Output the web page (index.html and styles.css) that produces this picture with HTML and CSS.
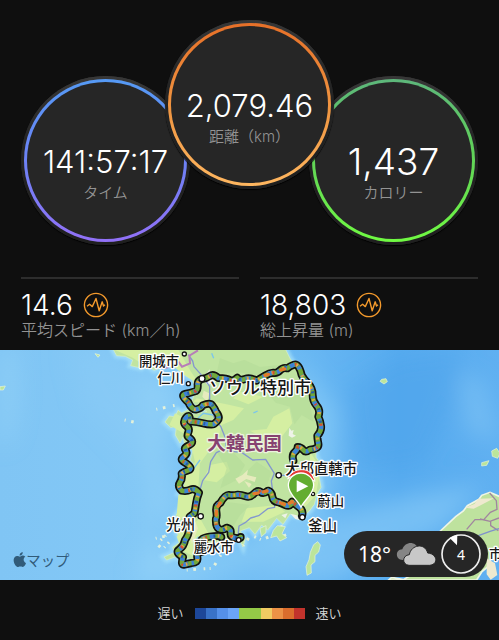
FILE: index.html
```html
<!DOCTYPE html>
<html lang="ja">
<head>
<meta charset="utf-8">
<meta name="viewport" content="width=device-width, initial-scale=1">
<title>アクティビティ</title>
<link rel="stylesheet" href="styles.css">
</head>
<body>
<main>
  <section class="dials">
    <div class="dial dial-time"><div class="ring"><div class="face">
      <span class="value">141:57:17</span><span class="label">タイム</span>
    </div></div></div>
    <div class="dial dial-distance"><div class="ring"><div class="face">
      <span class="value">2,079.46</span><span class="label">距離（km）</span>
    </div></div></div>
    <div class="dial dial-calories"><div class="ring"><div class="face">
      <span class="value large">1,437</span><span class="label">カロリー</span>
    </div></div></div>
  </section>

  <section class="stats">
    <div class="stat">
      <div class="stat-line"><span class="stat-value">14.6</span>
        <svg class="pulse" viewBox="0 0 26 26"><circle cx="13" cy="13" r="11.6"/><path d="M4 14.2 6.6 12.3 9.3 14.6 13 6.5 16.2 18.8 19.2 9.8 20.5 14 22 12.8"/></svg>
      </div>
      <span class="label">平均スピード (km／h)</span>
    </div>
    <div class="stat">
      <div class="stat-line"><span class="stat-value">18,803</span>
        <svg class="pulse" viewBox="0 0 26 26"><circle cx="13" cy="13" r="11.6"/><path d="M4 14.2 6.6 12.3 9.3 14.6 13 6.5 16.2 18.8 19.2 9.8 20.5 14 22 12.8"/></svg>
      </div>
      <span class="label">総上昇量 (m)</span>
    </div>
  </section>

  <section class="map">
    <svg class="map-art" viewBox="0 15 1497 690">
      <defs>
        <linearGradient id="sea" x1="0" x2="1" y1="0" y2="0">
          <stop offset="0" stop-color="#80c5f4"/><stop offset=".3" stop-color="#83c8f6"/>
          <stop offset=".65" stop-color="#65b5f2"/><stop offset=".8" stop-color="#56abef"/><stop offset="1" stop-color="#60b0f1"/>
        </linearGradient>
        <filter id="soft" x="-50%" y="-50%" width="200%" height="200%"><feGaussianBlur stdDeviation="34"/></filter>
        <filter id="edge"><feGaussianBlur stdDeviation="5"/></filter>
        <path id="coast" d="M338 10 350 32 376 34 398 45 392 62 423 69 440 58 462 76 500 60 538 64 552 88 578 104 583 124 606 132 583 150 575 169 596 190 621 199 580 207 565 194 545 204 534 196 525 216 508 213 495 231 513 248 530 240 526 270 540 294 549 276 556 305 579 315 571 345 588 363 557 392 552 420 536 447 559 456 544 488 528 511 544 532 530 562 545 588 518 607 524 622 492 636 500 645 530 634 542 649 565 640 585 653 596 627 616 616 627 600 650 607 675 590 693 600 704 574 719 586 729 606 736 580 720 558 748 548 765 568 785 540 803 555 830 520 849 538 870 507 905 517 928 498 943 478 950 449 963 427 957 394 964 360 948 337 947 294 956 240 947 183 925 120 895 69 871 42 855 10Z"/>
        <path id="north" d="M880 347Q875 330 884 322T893 306Q903 306 910 315T930 314Q958 312 955 296T952 272Q965 258 963 243T955 215Q962 195 950 182T938 150Q938 130 924 115T905 90Q896 54 882 59T862 70Q850 66 840 76T820 83Q808 84 795 92T770 107Q750 96 735 102T712 98Q700 110 690 105T655 99Q640 86 630 93T605 102Q592 107 593 120T588 138Q570 144 555 147T565 172Q576 196 590 193T608 181Q630 172 637 181T648 200Q662 218 652 228T640 238Q625 239 610 235T570 229Q570 204 558 218T558 242Q570 250 565 262T566 277Q586 291 568 300T556 314Q564 326 551 335T554 352Q582 370 565 376T545 386Q548 400 540 412T545 437Q560 440 572 434T597 443Q590 460 588 476T583 505L569 515Q563 535 566 550T555 585Q552 603 538 613T549 636Q541 662 553 659T575 654Q595 654 592 638T608 620Q620 600 608 590T630 575T664 577"/>
        <path id="south" d="M906 513Q911 497 898 487T876 470Q872 487 856 480T836 472Q819 470 817 455T804 437Q791 448 782 441T762 446Q750 459 737 454T714 449Q698 452 687 450T661 474Q646 481 649 500T648 520Q646 546 657 552T680 548Q694 552 692 564T706 579T722 576"/>
      </defs>
      <rect y="15" width="1497" height="690" fill="url(#sea)"/>
      <g filter="url(#soft)">
        <path fill="#9ad7fa" opacity=".5" d="M0 15H45L55 160 35 270 0 310ZM410 90 540 130 480 330 520 470 400 700 560 705 940 600 1000 370 1010 200 890 30 920 260 780 580 620 650 480 620Z"/>
        <path fill="#8bcdf7" opacity=".45" d="M210 15H330L450 80 510 200 470 430 380 310 250 180ZM1380 80 1450 110 1497 290 1400 260Z"/>
        <path fill="#489fe9" opacity=".4" d="M1040 130 1190 40 1390 15 1350 190 1280 350 1070 380Z"/>
        <path fill="#83c8f6" opacity=".7" d="M1000 520 1230 450 1450 420 1320 560 1000 705 740 705Z"/>
      </g>
      <use href="#coast" fill="none" stroke="#a9e3fa" stroke-width="18" opacity=".7" filter="url(#edge)"/>
      <use href="#coast" fill="#c0e4a1" stroke="#d9f0c2" stroke-width="2"/>
      <g fill="#d5efa2">
        <path d="M345 15H535L573 80 600 120 560 95 515 60 440 65 398 38ZM590 160 690 180 732 190 700 225 665 240 655 280 600 355 595 425 550 440 558 385 585 350 562 250 650 240 640 180 580 170ZM820 215 868 190 877 235 845 275 790 280 750 257 800 252ZM720 140 790 155 745 178 700 160ZM535 450 583 445 565 548 600 520 625 565 590 640 545 615 530 575 560 530 530 510ZM930 320 962 370 948 450 915 485 870 460 930 430ZM525 205 554 220 550 265 508 240ZM740 490 830 480 855 500 790 530 725 530ZM630 360 680 350 690 378 650 412 610 405Z"/>
      </g>
      <g fill="#b2da98" opacity=".5">
        <path d="M660 40 700 55 733 45 780 66 840 60 825 80 770 90 710 80 650 86ZM790 130 850 135 925 155 940 230 905 210 883 238 870 185 827 173ZM650 320 702 325 735 360 710 405 661 430 680 370ZM675 470 750 480 720 510 690 560 660 530ZM770 350 814 380 800 425 755 420 735 385Z"/>
      </g>
      <g fill="#e6ebbd">
        <path d="M706 401 727 390 744 374 741 390 769 397 764 411 739 402 717 416ZM733 408 755 417 747 428ZM566 560 586 530 594 550 576 598ZM611 137 628 145 622 170 607 155Z"/>
      </g>
      <g fill="#eef3e8">
        <path d="m868 248 6 9 7-2-3 12 10 5-12 6-10-6ZM604 96 620 85 629 73 630 101 649 110 622 119ZM872 507 890 511 901 526 886 522ZM844 510 863 505 856 520Z"/>
      </g>
      <g fill="none" stroke="#edf5d7" stroke-width="9" stroke-dasharray="3 17 8 23 5 13" opacity=".9">
        <path d="M467 580 494 574 508 591 488 613 470 596 507 563M560 675 600 672 638 670 665 626M730 602 752 570 785 585 830 565 857 578 840 535M469 193 530 180M374 225 401 231"/>
      </g>
      <path fill="#bce59b" stroke="#e8f4da" stroke-width="2" d="M941 599 953 590 961 600 956 621 945 631 945 650 933 660 934 684 921 691 918 665 927 644 931 622ZM1145 103 1158 101 1162 110 1152 117 1140 109ZM1475 318 1490 310 1500 325 1493 340 1477 334ZM1445 353 1467 347 1460 361 1445 363ZM832 542 856 545 846 566 860 578 840 588 830 573 812 578 820 556ZM780 550 798 542 798 563 784 575ZM0 125 16 123 10 135 0 135ZM285 26 300 30 294 37Z"/>
      <path fill="#bee29e" stroke="#eff5e5" stroke-width="5" d="M1318 561 1367 515 1390 498 1402 482 1437 463 1445 451 1470 442 1500 455V642L1475 633 1463 666 1446 680 1430 705H1166L1175 697 1210 704 1238 688 1320 680 1350 660Z"/>
      <path fill="#eee9cf" d="m1395 488 28-11 12-16 47-1-40 21-21 10ZM1460 640 1485 655 1492 690 1472 704 1460 688Z"/>
      <g fill="none" stroke="#a1869f" stroke-width="4"><path d="M1469 444 1489 467 1491 493 1471 502 1452 523 1425 524 1400 553M1440 522 1470 529 1497 519M1472 527V542L1495 557"/></g>
      <path fill="none" stroke="#7f91cb" stroke-width="4" d="M1435 572 1470 559 1497 551"/>
      <g fill="none" stroke="#8398ce" stroke-width="4" stroke-linejoin="round">
        <path d="M565 29 578 48 582 65 606 92 629 124 629 180 646 225 662 244 677 281 678 309 649 323 632 350 626 382 608 407 601 431M680 317 726 323 758 345 797 343 823 385 814 408 817 431 822 465 824 487 803 491 776 512 752 519 737 532 717 543 714 571M838 391H866"/>
      </g>
      <path fill="none" stroke="#b77eb8" stroke-width="6" d="M594 16 568 32 570 55 546 65 535 50M505 67 485 70"/>
      <g fill="none" stroke="#79c5ed" stroke-width="4"><path d="M640 210 610 205 594 219M600 345 584 367 567 379M760 204 773 198M583 590 596 575M635 25 641 40"/></g>
      <g class="route">
        <g class="casing"><use href="#north"/><use href="#south"/></g>
        <g class="base"><use href="#north"/><use href="#south"/></g>
        <g class="blue"><use href="#north"/><use href="#south"/></g>
        <g class="dark"><use href="#north"/><use href="#south"/></g>
        <g class="gold"><use href="#north"/><use href="#south"/></g>
        <g class="red"><use href="#north"/><use href="#south"/></g>
        <path class="hot" d="M795 91 805 88M842 75 865 69M661 474 649 491 649 519M762 446 782 443 804 437M842 474 858 480 876 470 890 480"/>
      </g>
      <g fill="#fff" stroke="#111" stroke-width="4">
        <circle cx="553" cy="27" r="6"/><circle cx="565" cy="116" r="6"/><circle cx="606" cy="101" r="9"/>
        <circle cx="836" cy="391" r="8"/><circle cx="602" cy="514" r="8"/><circle cx="716" cy="585" r="7"/><circle cx="907" cy="517" r="8"/><circle cx="939" cy="447" r="5"/>
      </g>
      <g class="places">
        <text x="417" y="62" font-size="40">開城市</text>
        <text x="472" y="113" font-size="40">仁川</text>
        <text x="627" y="146" font-size="51">ソウル特別市</text>
        <text class="country" x="622" y="314" font-size="56">大韓民国</text>
        <text x="856" y="387" font-size="43">大邱直轄市</text>
        <text x="952" y="484" font-size="40">蔚山</text>
        <text x="925" y="558" font-size="43">釜山</text>
        <text x="499" y="555" font-size="43">光州</text>
        <text x="581" y="621" font-size="40">麗水市</text>
        <text x="1467" y="642" font-size="40">市</text>
      </g>
      <path fill="#e53935" stroke="#fff" stroke-width="3" d="M863 402C873 380 887 374 906 374 926 374 938 385 945 409L937 404C926 391 917 386 903 386 886 386 874 393 863 402Z"/>
      <path fill="#63ad31" stroke="#fff" stroke-width="4" d="M903 487C894 464 865 449 865 421A38 37 0 0 1 941 421C941 449 912 464 903 487Z"/>
      <path fill="#fff" d="M890 406 925 424 890 442Z"/>
      <g fill="#315b79">
        <path d="M60 635C53 631 41 632 41 647 42 658 50 667 55 666 59 664 63 664 68 666 73 666 77 658 78 654 69 649 69 639 76 635 71 630 65 631 60 635ZM59 632C58 626 63 622 68 621 69 627 65 632 59 632Z"/>
        <text class="brand" x="79" y="662" font-size="43">マップ</text>
      </g>
    </svg>
    <aside class="weather">
      <span class="temp">18°</span>
      <svg class="clouds" viewBox="0 0 120 70">
        <path fill="#858585" d="M20 53C-2 53-4 22 19 21 28-3 58-5 68 21L45 50Z"/>
        <path fill="#c8c8c8" stroke="#262626" stroke-width="3" d="M39 69C17 67 18 39 40 37 45 7 87 0 95 32 126 35 127 67 101 69Z"/>
      </svg>
      <div class="wind">
        <svg viewBox="0 0 120 120"><circle cx="60" cy="60" r="57" fill="none" stroke="#eee" stroke-width="5"/><path fill="#fff" d="M26 12Q37 4 49 3L48 34Z"/></svg>
        <span>4</span>
      </div>
    </aside>
  </section>

  <footer class="legend">
    <span>遅い</span>
    <div class="scale"><i class="s1"></i><i class="s2"></i><i class="s3"></i><i class="s4"></i><i class="s5"></i><i class="s5"></i><i class="s6"></i><i class="s7"></i><i class="s8"></i><i class="s9"></i></div>
    <span>速い</span>
  </footer>
</main>
</body>
</html>
```
FILE: styles.css
```css
* { box-sizing: border-box; }
body {
  margin: 0;
  background: #0f0f0f;
  color: #fff;
  font-family: Inter, "Noto Sans CJK JP", sans-serif;
}
.dials {
  display: flex;
  justify-content: center;
  align-items: flex-end;
  padding-top: 20px;
}
.dial {
  width: 169px;
  height: 169px;
  flex: none;
  padding: 3px;
  border-radius: 50%;
  background: linear-gradient(#505050, #2d2d2d 40%, #222);
  box-shadow: inset 0 0 0 3px #1b1b1b77, 0 1px 1px #000;
}
.dial-distance {
  position: relative;
  z-index: 1;
  margin: 0 -25px 56px;
}
.ring {
  height: 100%;
  padding: 3px;
  border-radius: 50%;
}
.dial-time .ring { background: linear-gradient(#559af5, #6d82f5 50%, #9271f8); }
.dial-distance .ring { background: linear-gradient(#e77028, #f09743 55%, #ffb760); }
.dial-calories .ring { background: linear-gradient(#5db77b, #60d159 45%, #70fa42); }
.face {
  height: 100%;
  border-radius: 50%;
  background: #262626;
  display: flex;
  flex-direction: column;
  align-items: center;
  padding-top: 57px;
}
.value {
  font-size: 31px;
  font-weight: 350;
  line-height: 45px;
  white-space: nowrap;
}
.value.large { font-size: 37px; }
.label {
  font-weight: 350;
  font-size: 15px;
  line-height: 18px;
  color: #939393;
  white-space: nowrap;
}
.stats {
  display: grid;
  grid-template-columns: 1fr 1fr;
  gap: 21px;
  padding: 32px 21px 10px;
}
.stat { border-top: 2px solid #2d2d2d; padding-top: 10px; }
.stat-line {
  display: flex;
  align-items: center;
  gap: 10px;
  height: 32px;
}
.stat-value { font-size: 28px; font-weight: 350; line-height: 32px; }
.stat .label { display: block; font-size: 16px; line-height: 19px; }
.pulse {
  width: 26px;
  height: 26px;
  fill: none;
  stroke: #f49a2c;
  stroke-width: 1.4;
  stroke-linejoin: round;
}
.map { position: relative; }
.map-art { display: block; width: 100%; height: auto; }
.route { fill: none; stroke-linejoin: round; stroke-linecap: round; }
.casing { stroke: #111; stroke-width: 24; }
.base { stroke: #70a83d; stroke-width: 14; }
.blue { stroke: #3d82d6; stroke-width: 13; stroke-linecap: butt; stroke-dasharray: 9 14 15 11 6 18; }
.dark { stroke: #285da9; stroke-width: 10; stroke-linecap: butt; stroke-dasharray: 6 34 5 49; }
.gold { stroke: #e2a83f; stroke-width: 10; stroke-linecap: butt; stroke-dasharray: 0 17 5 31 6 22; }
.red { stroke: #d54e2d; stroke-width: 10; stroke-linecap: butt; stroke-dasharray: 0 41 6 60 4 27; }
.hot { stroke: #e37a2d; stroke-width: 10; stroke-dasharray: 12 16; }
.places {
  font-family: "Noto Sans CJK JP", sans-serif;
  font-weight: 500;
  fill: #161616;
  stroke: #fff;
  stroke-width: 8;
  stroke-linejoin: round;
  paint-order: stroke;
}
.country { fill: #874371; font-weight: 700; stroke: #eaf3dc; }
.brand { font-family: "Noto Sans CJK JP", sans-serif; }
.weather {
  position: absolute;
  right: 11px;
  bottom: 3px;
  height: 46px;
  padding: 0 7px 0 14px;
  border-radius: 23px;
  background: #262626;
  display: flex;
  align-items: center;
  gap: 5px;
}
.temp { font-family: "Noto Sans", sans-serif; font-size: 21px; }
.clouds { width: 40px; height: 24px; }
.wind {
  width: 40px;
  height: 40px;
  display: grid;
  place-items: center;
}
.wind > * { grid-area: 1 / 1; }
.wind svg { width: 40px; height: 40px; }
.wind span { font-family: "Noto Sans", sans-serif; font-size: 14px; }
.legend {
  display: flex;
  justify-content: center;
  align-items: center;
  gap: 11px;
  padding: 23px 0 17px;
  font-family: "Noto Sans CJK JP", sans-serif;
  font-weight: 350;
  font-size: 13px;
  line-height: 20px;
  color: #d8d8d8;
}
.scale { display: flex; }
.scale i { width: 11px; height: 11px; }
.s1 { background: #1d4799; }
.s2 { background: #3972c8; }
.s3 { background: #5590e9; }
.s4 { background: #6ba5f7; }
.s5 { background: #94c947; }
.s6 { background: #f0cb62; }
.s7 { background: #ec9246; }
.s8 { background: #db6d2d; }
.s9 { background: #c2332c; }
```
